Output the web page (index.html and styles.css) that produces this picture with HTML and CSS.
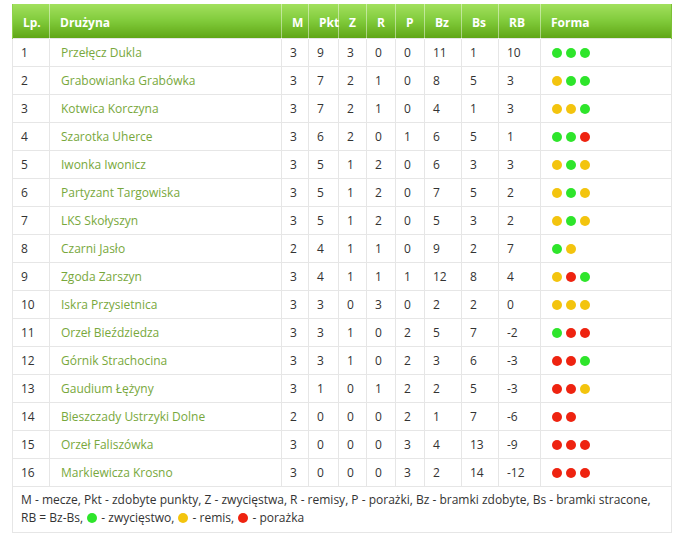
FILE: index.html
```html
<!DOCTYPE html>
<html lang="pl">
<head>
<meta charset="utf-8">
<title>Tabela</title>
<link rel="stylesheet" href="styles.css">
</head>
<body>
<div class="wrap">
<table class="league">
<colgroup>
<col class="c-lp"><col class="c-team"><col class="c-m"><col class="c-pkt"><col class="c-z"><col class="c-r"><col class="c-p"><col class="c-bz"><col class="c-bs"><col class="c-rb"><col class="c-form">
</colgroup>
<thead>
<tr><th>Lp.</th><th>Drużyna</th><th>M</th><th>Pkt</th><th>Z</th><th>R</th><th>P</th><th>Bz</th><th>Bs</th><th>RB</th><th>Forma</th></tr>
</thead>
<tbody>
<tr><td>1</td><td class="team">Przełęcz Dukla</td><td>3</td><td>9</td><td>3</td><td>0</td><td>0</td><td>11</td><td>1</td><td>10</td><td class="form"><span class="dot w"></span><span class="dot w"></span><span class="dot w"></span></td></tr>
<tr><td>2</td><td class="team">Grabowianka Grabówka</td><td>3</td><td>7</td><td>2</td><td>1</td><td>0</td><td>8</td><td>5</td><td>3</td><td class="form"><span class="dot d"></span><span class="dot w"></span><span class="dot w"></span></td></tr>
<tr><td>3</td><td class="team">Kotwica Korczyna</td><td>3</td><td>7</td><td>2</td><td>1</td><td>0</td><td>4</td><td>1</td><td>3</td><td class="form"><span class="dot d"></span><span class="dot d"></span><span class="dot w"></span></td></tr>
<tr><td>4</td><td class="team">Szarotka Uherce</td><td>3</td><td>6</td><td>2</td><td>0</td><td>1</td><td>6</td><td>5</td><td>1</td><td class="form"><span class="dot w"></span><span class="dot w"></span><span class="dot l"></span></td></tr>
<tr><td>5</td><td class="team">Iwonka Iwonicz</td><td>3</td><td>5</td><td>1</td><td>2</td><td>0</td><td>6</td><td>3</td><td>3</td><td class="form"><span class="dot d"></span><span class="dot w"></span><span class="dot d"></span></td></tr>
<tr><td>6</td><td class="team">Partyzant Targowiska</td><td>3</td><td>5</td><td>1</td><td>2</td><td>0</td><td>7</td><td>5</td><td>2</td><td class="form"><span class="dot d"></span><span class="dot w"></span><span class="dot d"></span></td></tr>
<tr><td>7</td><td class="team">LKS Skołyszyn</td><td>3</td><td>5</td><td>1</td><td>2</td><td>0</td><td>5</td><td>3</td><td>2</td><td class="form"><span class="dot d"></span><span class="dot w"></span><span class="dot d"></span></td></tr>
<tr><td>8</td><td class="team">Czarni Jasło</td><td>2</td><td>4</td><td>1</td><td>1</td><td>0</td><td>9</td><td>2</td><td>7</td><td class="form"><span class="dot w"></span><span class="dot d"></span></td></tr>
<tr><td>9</td><td class="team">Zgoda Zarszyn</td><td>3</td><td>4</td><td>1</td><td>1</td><td>1</td><td>12</td><td>8</td><td>4</td><td class="form"><span class="dot d"></span><span class="dot l"></span><span class="dot w"></span></td></tr>
<tr><td>10</td><td class="team">Iskra Przysietnica</td><td>3</td><td>3</td><td>0</td><td>3</td><td>0</td><td>2</td><td>2</td><td>0</td><td class="form"><span class="dot d"></span><span class="dot d"></span><span class="dot d"></span></td></tr>
<tr><td>11</td><td class="team">Orzeł Bieździedza</td><td>3</td><td>3</td><td>1</td><td>0</td><td>2</td><td>5</td><td>7</td><td>-2</td><td class="form"><span class="dot w"></span><span class="dot l"></span><span class="dot l"></span></td></tr>
<tr><td>12</td><td class="team">Górnik Strachocina</td><td>3</td><td>3</td><td>1</td><td>0</td><td>2</td><td>3</td><td>6</td><td>-3</td><td class="form"><span class="dot l"></span><span class="dot l"></span><span class="dot w"></span></td></tr>
<tr><td>13</td><td class="team">Gaudium Łężyny</td><td>3</td><td>1</td><td>0</td><td>1</td><td>2</td><td>2</td><td>5</td><td>-3</td><td class="form"><span class="dot l"></span><span class="dot l"></span><span class="dot d"></span></td></tr>
<tr><td>14</td><td class="team">Bieszczady Ustrzyki Dolne</td><td>2</td><td>0</td><td>0</td><td>0</td><td>2</td><td>1</td><td>7</td><td>-6</td><td class="form"><span class="dot l"></span><span class="dot l"></span></td></tr>
<tr><td>15</td><td class="team">Orzeł Faliszówka</td><td>3</td><td>0</td><td>0</td><td>0</td><td>3</td><td>4</td><td>13</td><td>-9</td><td class="form"><span class="dot l"></span><span class="dot l"></span><span class="dot l"></span></td></tr>
<tr><td>16</td><td class="team">Markiewicza Krosno</td><td>3</td><td>0</td><td>0</td><td>0</td><td>3</td><td>2</td><td>14</td><td>-12</td><td class="form"><span class="dot l"></span><span class="dot l"></span><span class="dot l"></span></td></tr>
</tbody>
<tfoot>
<tr><td colspan="11" class="legend">M - mecze, Pkt - zdobyte punkty, Z - zwycięstwa, R - remisy, P - porażki, Bz - bramki zdobyte, Bs - bramki stracone, RB = Bz-Bs, <span class="dot w"></span> - zwycięstwo, <span class="dot d"></span> - remis, <span class="dot l"></span> - porażka</td></tr>
</tfoot>
</table>
</div>
</body>
</html>
```

FILE: styles.css
```css
html, body {
  margin: 0;
  padding: 0;
  background: #ffffff;
}
.wrap {
  padding: 4px 9px 0 12px;
}
.league {
  width: 659px;
  border-collapse: collapse;
  table-layout: fixed;
  font-family: "Open Sans", "Noto Sans", sans-serif;
  font-size: 12px;
  color: #333333;
}
.c-lp { width: 37px; }
.c-team { width: 232px; }
.c-m { width: 27px; }
.c-pkt { width: 30px; }
.c-z { width: 28px; }
.c-r { width: 29px; }
.c-p { width: 29px; }
.c-bz { width: 37px; }
.c-bs { width: 37px; }
.c-rb { width: 42px; }
.c-form { width: 131px; }
.league th {
  height: 34px;
  padding: 3px 0 0 10px;
  text-align: left;
  font-weight: 700;
  color: #ffffff;
  background: linear-gradient(to bottom, #a2e05e 0%, #80ca3a 50%, #5fa616 100%);
  border-left: 1px solid rgba(255,255,255,0.45);
  box-sizing: border-box;
}
.league th:first-child {
  border-left: 1px solid #8fd24a;
}
.league th:last-child {
  border-right: 1px solid #7cc036;
}
.league td {
  height: 27px;
  padding: 0 0 0 8px;
  border: 1px solid #e6e6e6;
  white-space: nowrap;
  overflow: hidden;
}
.league td.team {
  padding-left: 11px;
  color: #78a83c;
}
.league td.form {
  padding-left: 11px;
}
.dot {
  display: inline-block;
  width: 10px;
  height: 10px;
  border-radius: 50%;
  margin-right: 4px;
  vertical-align: -1px;
}
.dot.w { background: #2ee52b; }
.dot.d { background: #f3c40e; }
.dot.l { background: #ee2310; }
.league td.legend {
  height: auto;
  padding: 4px 8px 5px 8px;
  line-height: 18px;
  white-space: normal;
  font-size: 12px;
}
.legend .dot {
  margin: 0 1px;
}
```
